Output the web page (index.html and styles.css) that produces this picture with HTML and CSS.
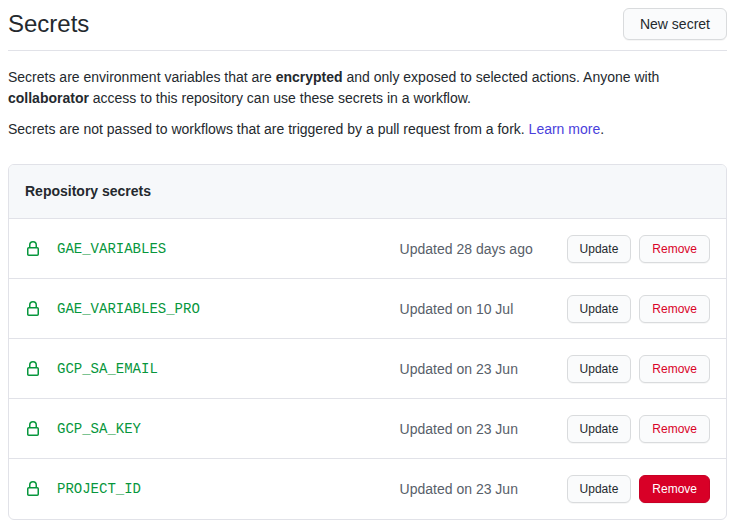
FILE: index.html
```html
<!DOCTYPE html>
<html lang="en">
<head>
<meta charset="utf-8">
<title>Secrets</title>
<link rel="stylesheet" href="styles.css">
</head>
<body>
<svg class="sprite" aria-hidden="true">
  <symbol id="lock" viewBox="0 0 16 16">
    <path fill-rule="evenodd" d="M4 4v2h-.25A1.75 1.75 0 002 7.75v5.5c0 .966.784 1.75 1.75 1.75h8.5A1.75 1.75 0 0014 13.25v-5.5A1.75 1.75 0 0012.25 6H12V4a4 4 0 10-8 0zm6.5 2V4a2.5 2.5 0 10-5 0v2h5zM12 7.5h.25a.25.25 0 01.25.25v5.5a.25.25 0 01-.25.25h-8.5a.25.25 0 01-.25-.25v-5.5a.25.25 0 01.25-.25H12z"/>
  </symbol>
</svg>
<main class="page">
  <header class="subhead">
    <h1 class="title">Secrets</h1>
    <button class="btn" type="button">New secret</button>
  </header>
  <p class="text">Secrets are environment variables that are <strong>encrypted</strong> and only exposed to selected actions. Anyone with <strong>collaborator</strong> access to this repository can use these secrets in a workflow.</p>
  <p class="text">Secrets are not passed to workflows that are triggered by a pull request from a fork. <a href="#learn">Learn more</a>.</p>
  <section class="box">
    <h2 class="box-header">Repository secrets</h2>
    <ul class="rows">
      <li class="row">
        <svg class="icon" aria-hidden="true"><use href="#lock"/></svg>
        <code class="name">GAE_VARIABLES</code>
        <span class="updated">Updated 28 days ago</span>
        <div class="actions"><button class="btn btn-sm" type="button">Update</button><button class="btn btn-sm btn-danger" type="button">Remove</button></div>
      </li>
      <li class="row">
        <svg class="icon" aria-hidden="true"><use href="#lock"/></svg>
        <code class="name">GAE_VARIABLES_PRO</code>
        <span class="updated">Updated on 10 Jul</span>
        <div class="actions"><button class="btn btn-sm" type="button">Update</button><button class="btn btn-sm btn-danger" type="button">Remove</button></div>
      </li>
      <li class="row">
        <svg class="icon" aria-hidden="true"><use href="#lock"/></svg>
        <code class="name">GCP_SA_EMAIL</code>
        <span class="updated">Updated on 23 Jun</span>
        <div class="actions"><button class="btn btn-sm" type="button">Update</button><button class="btn btn-sm btn-danger" type="button">Remove</button></div>
      </li>
      <li class="row">
        <svg class="icon" aria-hidden="true"><use href="#lock"/></svg>
        <code class="name">GCP_SA_KEY</code>
        <span class="updated">Updated on 23 Jun</span>
        <div class="actions"><button class="btn btn-sm" type="button">Update</button><button class="btn btn-sm btn-danger" type="button">Remove</button></div>
      </li>
      <li class="row">
        <svg class="icon" aria-hidden="true"><use href="#lock"/></svg>
        <code class="name">PROJECT_ID</code>
        <span class="updated">Updated on 23 Jun</span>
        <div class="actions"><button class="btn btn-sm" type="button">Update</button><button class="btn btn-sm btn-danger active" type="button">Remove</button></div>
      </li>
    </ul>
  </section>
</main>
</body>
</html>
```
FILE: styles.css
```css
* { box-sizing: border-box; }
body {
  margin: 0;
  background: #fff;
  color: #24292e;
  font: 14px/21px "Liberation Sans", Arial, sans-serif;
}
.sprite { display: none; }
.page { padding: 8px 11px 8px 8px; }
.subhead {
  display: flex;
  align-items: center;
  justify-content: space-between;
  padding-bottom: 10px;
  margin-bottom: 16px;
  border-bottom: 1px solid #e1e2e8;
}
.title { margin: 0; font-size: 24px; line-height: 32px; font-weight: 400; }
.text { margin: 0 0 10px; }
a { color: #4a3fdc; text-decoration: none; }
.btn {
  padding: 5px 16px;
  border: 1px solid #d9dbdd;
  border-radius: 6px;
  background: #fafbfc;
  box-shadow: 0 1px 0 rgba(27, 31, 35, .04);
  color: #24292e;
  font: 14px/20px "Liberation Sans", Arial, sans-serif;
  cursor: pointer;
}
.btn-sm { padding: 3px 12px; font-size: 12px; }
.btn-danger { color: #d90429; }
.btn-danger.active { background: #d80027; border-color: #c80025; color: #fff; }
.box { margin-top: 24px; border: 1px solid #e1e2e8; border-radius: 6px; }
.box-header {
  margin: 0;
  padding: 16px;
  background: #f6f8fa;
  border-radius: 5px 5px 0 0;
  font-size: 14px;
  line-height: 21px;
}
.rows { margin: 0; padding: 0; list-style: none; }
.row {
  display: grid;
  grid-template-columns: 16px 1fr 151px auto;
  align-items: center;
  column-gap: 16px;
  padding: 16px 16px 15px;
  border-top: 1px solid #e1e2e8;
}
.row:last-child { padding-bottom: 16px; }
.icon { width: 16px; height: 16px; fill: #07963c; }
.name { color: #07963c; font: 14px/21px "Liberation Mono", monospace; }
.updated { color: #586069; }
.actions { display: flex; gap: 8px; }
```
